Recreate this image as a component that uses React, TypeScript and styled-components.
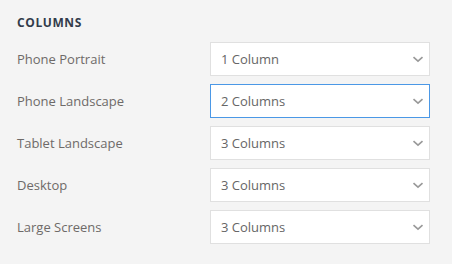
import React from 'react';
import styled, { createGlobalStyle } from 'styled-components';

const GlobalStyle = createGlobalStyle`
  html, body {
    margin: 0;
    padding: 0;
    background: #f4f4f4;
  }
  body {
    font-family: 'Open Sans', 'Liberation Sans', sans-serif;
  }
`;

const Panel = styled.div`
  width: 452px;
  height: 264px;
  box-sizing: border-box;
  padding: 15px 0 0 17px;
  background: #f4f4f4;
`;

const Heading = styled.h3`
  margin: 0 0 11px;
  font-size: 12px;
  line-height: 16px;
  font-weight: 700;
  letter-spacing: 0.6px;
  color: #323c4b;
  text-transform: uppercase;
`;

const Rows = styled.div`
  display: grid;
  grid-template-columns: 193px 220px;
  row-gap: 8px;
  align-items: center;
`;

const Label = styled.label`
  font-size: 13px;
  line-height: 18px;
  color: #6e6a68;
  margin-top: -1px;
`;

const SelectBox = styled.div<{ focused?: boolean }>`
  position: relative;
  height: 34px;
  box-sizing: border-box;
  display: flex;
  align-items: center;
  padding: 0 10px;
  background: #fff;
  border: 1px solid ${(props) => (props.focused ? '#4b98e6' : '#e0e0e0')};
  font-size: 13px;
  color: #666;
`;

const Chevron = styled.svg`
  position: absolute;
  right: 5px;
  top: 13px;
`;

const rows = [
  { label: 'Phone Portrait', value: '1 Column' },
  { label: 'Phone Landscape', value: '2 Columns', focused: true },
  { label: 'Tablet Landscape', value: '3 Columns' },
  { label: 'Desktop', value: '3 Columns' },
  { label: 'Large Screens', value: '3 Columns' },
];

export default function App() {
  return (
    <Panel>
      <GlobalStyle />
      <Heading>Columns</Heading>
      <Rows>
        {rows.map((row) => (
          <React.Fragment key={row.label}>
            <Label>{row.label}</Label>
            <SelectBox focused={row.focused}>
              {row.value}
              <Chevron width="12" height="7" viewBox="0 0 12 7">
                <path d="M1.5 1.2l4.5 4L10.5 1.2" fill="none" stroke="#999" strokeWidth="1.6" />
              </Chevron>
            </SelectBox>
          </React.Fragment>
        ))}
      </Rows>
    </Panel>
  );
}
